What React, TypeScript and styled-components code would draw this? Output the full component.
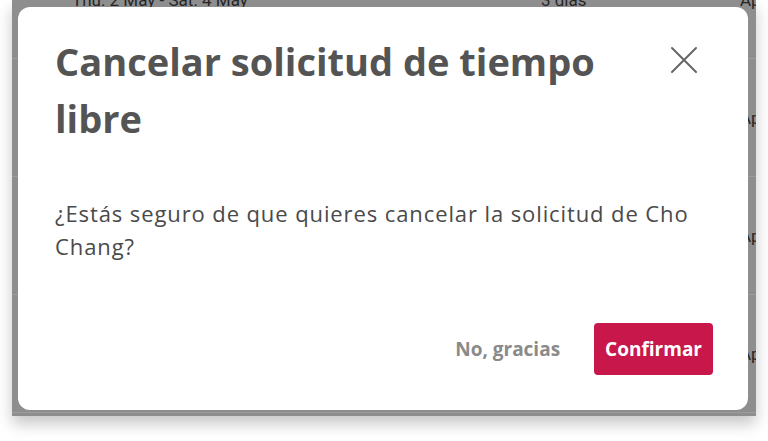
import styled, { createGlobalStyle } from 'styled-components';

const GlobalStyle = createGlobalStyle`
  html, body {
    margin: 0;
    padding: 0;
    background: #ffffff;
  }
  body {
    font-family: "Open Sans", "Noto Sans", sans-serif;
  }
`;

const Page = styled.div`
  width: 768px;
  height: 441px;
  overflow: hidden;
  background: #ffffff;
`;

const Backdrop = styled.div`
  position: relative;
  width: 744px;
  height: 416px;
  margin-left: 12px;
  background: #8e8e8e;
  box-shadow: 0 8px 14px rgba(0, 0, 0, 0.22);
  overflow: hidden;
`;

const Table = styled.div`
  display: flex;
  flex-direction: column;
  margin-top: -59px;
`;

const Row = styled.div`
  display: grid;
  grid-template-columns: 469px 199px 100px;
  align-items: center;
  height: 117px;
  padding-left: 60px;
  border-bottom: 1px solid #9c9c9c;
  font-family: Roboto, "Noto Sans", sans-serif;
  font-size: 17px;
  color: #262626;
`;

const Cell = styled.span`
  white-space: nowrap;
`;

const Modal = styled.div`
  position: absolute;
  top: 7px;
  left: 6px;
  width: 730px;
  height: 403px;
  box-sizing: border-box;
  padding: 26px 35px 35px 37px;
  background: #ffffff;
  border-radius: 12px;
  display: flex;
  flex-direction: column;
`;

const Header = styled.div`
  display: flex;
  align-items: flex-start;
  justify-content: space-between;
  gap: 30px;
`;

const Title = styled.h2`
  margin: 0;
  max-width: 580px;
  font-size: 38px;
  line-height: 57px;
  font-weight: 700;
  color: #545454;
`;

const CloseButton = styled.button`
  display: flex;
  align-items: center;
  justify-content: center;
  width: 36px;
  height: 36px;
  margin: 9px 11px 0 0;
  padding: 0;
  border: none;
  background: transparent;
  cursor: pointer;
`;

const Message = styled.p`
  margin: 50px 0 0;
  font-size: 22px;
  line-height: 33px;
  letter-spacing: 0.9px;
  color: #4a4a4a;
`;

const Footer = styled.div`
  margin-top: auto;
  display: flex;
  justify-content: flex-end;
  align-items: center;
  gap: 23px;
`;

const Button = styled.button<{ primary?: boolean }>`
  height: 52px;
  padding: 0 11px;
  border: none;
  border-radius: 4px;
  font-family: "Open Sans", "Noto Sans", sans-serif;
  font-size: 19px;
  font-weight: 700;
  cursor: pointer;
  background: ${(p) => (p.primary ? '#c8174a' : 'transparent')};
  color: ${(p) => (p.primary ? '#ffffff' : '#8a8a8a')};
`;

const rows = [0, 1, 2, 3];

export default function App() {
  return (
    <Page>
      <GlobalStyle />
      <Backdrop>
        <Table>
          {rows.map((i) => (
            <Row key={i}>
              <Cell>Thu. 2 May - Sat. 4 May</Cell>
              <Cell>3 días</Cell>
              <Cell>Aprobado</Cell>
            </Row>
          ))}
        </Table>
        <Modal>
          <Header>
            <Title>Cancelar solicitud de tiempo libre</Title>
            <CloseButton aria-label="Cerrar">
              <svg width="28" height="28" viewBox="0 0 28 28" fill="none">
                <path d="M2 2L26 26M26 2L2 26" stroke="#666666" strokeWidth="2" strokeLinecap="round" />
              </svg>
            </CloseButton>
          </Header>
          <Message>¿Estás seguro de que quieres cancelar la solicitud de Cho Chang?</Message>
          <Footer>
            <Button>No, gracias</Button>
            <Button primary>Confirmar</Button>
          </Footer>
        </Modal>
      </Backdrop>
    </Page>
  );
}
